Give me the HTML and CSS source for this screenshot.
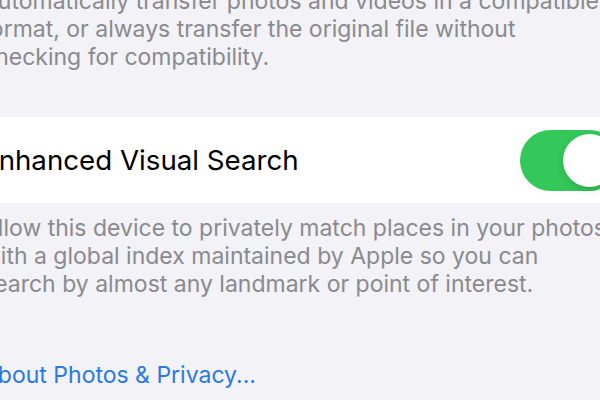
FILE: index.html
```html
<!DOCTYPE html>
<html lang="en">
<head>
    <meta charset="UTF-8">
    <meta name="viewport" content="width=device-width, initial-scale=1.0">
    <title>Photos Settings</title>
    <link rel="stylesheet" href="styles.css">
</head>
<body>
    <div class="settings">
        <p class="footer-text first">
            Automatically transfer photos and videos in a compatible<br>
            format, or always transfer the original file without<br>
            checking for compatibility.
        </p>

        <div class="group">
            <div class="row">
                <span class="row-label">Enhanced Visual Search</span>
                <div class="toggle on">
                    <div class="knob"></div>
                </div>
            </div>
        </div>

        <p class="footer-text second">
            Allow this device to privately match places in your photos<br>
            with a global index maintained by Apple so you can<br>
            search by almost any landmark or point of interest.
        </p>

        <a class="link" href="#">About Photos &amp; Privacy...</a>
    </div>
</body>
</html>
```

FILE: styles.css
```css
body {
    margin: 0;
    padding: 0;
    background-color: #f2f2f7;
    font-family: Inter, "Noto Sans", sans-serif;
    overflow: hidden;
    height: 400px;
}
.settings {
    margin-left: -34px;
    width: 674px;
}
.footer-text {
    margin: 0;
    padding-left: 16px;
    font-size: 23px;
    line-height: 28px;
    color: #8a8a8e;
    white-space: nowrap;
}
.footer-text.first {
    margin-top: -13px;
}
.footer-text.second {
    margin-top: 11px;
}
.group {
    margin-top: 46px;
    background-color: #fff;
}
.row {
    display: flex;
    align-items: center;
    justify-content: space-between;
    height: 86px;
    padding: 0 20px 0 16px;
}
.row-label {
    font-size: 27.7px;
    color: #000;
}
.toggle {
    display: flex;
    align-items: center;
    justify-content: flex-end;
    width: 100px;
    height: 61px;
    padding: 0 4px;
    box-sizing: border-box;
    border-radius: 31px;
    background-color: #e9e9eb;
}
.toggle.on {
    background-color: #34c759;
}
.knob {
    width: 53px;
    height: 53px;
    border-radius: 50%;
    background-color: #fff;
    box-shadow: 0 3px 8px rgba(0, 0, 0, 0.12), 0 1px 1px rgba(0, 0, 0, 0.08);
}
.link {
    display: block;
    margin-top: 63px;
    padding-left: 16px;
    font-size: 23px;
    line-height: 28px;
    color: #2a7ae2;
    text-decoration: none;
}
```
